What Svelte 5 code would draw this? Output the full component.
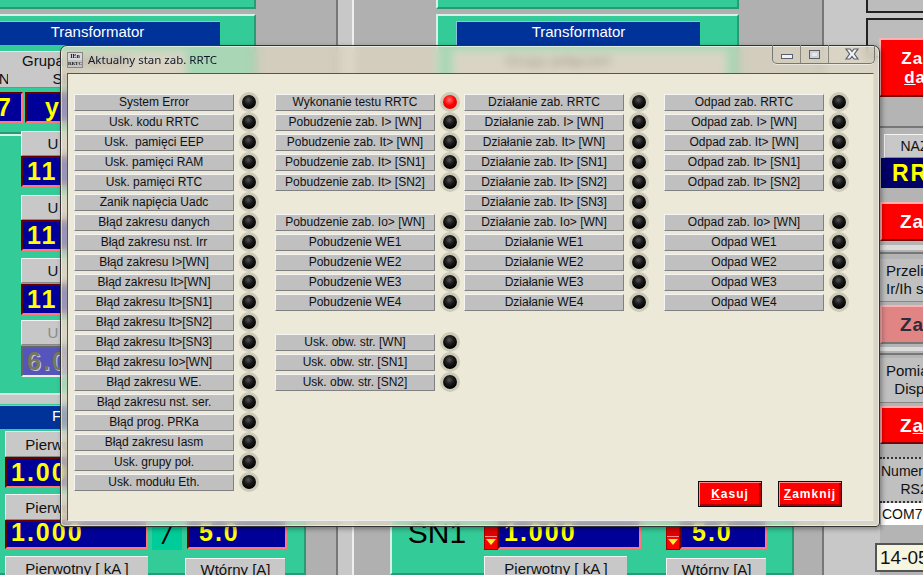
<script lang="ts">
  type Item = { label: string; on?: boolean } | null;

  const col1: Item[] = [
    "System Error", "Usk. kodu RRTC", "Usk.  pamięci EEP", "Usk. pamięci RAM", "Usk. pamięci RTC",
    "Zanik napięcia Uadc", "Błąd zakresu danych", "Błąd zakresu nst. Irr", "Błąd zakresu I>[WN]",
    "Błąd zakresu It>[WN]", "Błąd zakresu It>[SN1]", "Błąd zakresu It>[SN2]", "Błąd zakresu It>[SN3]",
    "Błąd zakresu Io>[WN]", "Błąd zakresu WE.", "Błąd zakresu nst. ser.", "Błąd prog. PRKa",
    "Błąd zakresu Iasm", "Usk. grupy poł.", "Usk. modułu Eth.",
  ].map((label) => ({ label }));

  const col2: Item[] = [
    { label: "Wykonanie testu RRTC", on: true },
    { label: "Pobudzenie zab. I> [WN]" },
    { label: "Pobudzenie zab. It> [WN]" },
    { label: "Pobudzenie zab. It> [SN1]" },
    { label: "Pobudzenie zab. It> [SN2]" },
    null,
    { label: "Pobudzenie zab. Io> [WN]" },
    { label: "Pobudzenie WE1" },
    { label: "Pobudzenie WE2" },
    { label: "Pobudzenie WE3" },
    { label: "Pobudzenie WE4" },
    null,
    { label: "Usk. obw. str. [WN]" },
    { label: "Usk. obw. str. [SN1]" },
    { label: "Usk. obw. str. [SN2]" },
  ];

  const col3: Item[] = [
    "Działanie zab. RRTC", "Działanie zab. I> [WN]", "Działanie zab. It> [WN]", "Działanie zab. It> [SN1]",
    "Działanie zab. It> [SN2]", "Działanie zab. It> [SN3]", "Działanie zab. Io> [WN]", "Działanie WE1",
    "Działanie WE2", "Działanie WE3", "Działanie WE4",
  ].map((label) => ({ label }));

  const col4: Item[] = [
    { label: "Odpad zab. RRTC" },
    { label: "Odpad zab. I> [WN]" },
    { label: "Odpad zab. It> [WN]" },
    { label: "Odpad zab. It> [SN1]" },
    { label: "Odpad zab. It> [SN2]" },
    null,
    { label: "Odpad zab. Io> [WN]" },
    { label: "Odpad WE1" },
    { label: "Odpad WE2" },
    { label: "Odpad WE3" },
    { label: "Odpad WE4" },
  ];

  const columns = [col1, col2, col3, col4];

  // pieces of the main window lying behind the dialog: [class, x, y, w, h, text]
  const desk: [string, number, number, number, number, string][] = [
    ["light", 338, 0, 14, 575, ""],
    ["vline", 336, 0, 2, 575, ""],
    ["wline", 352, 0, 2, 575, ""],
    ["vline", 822, 0, 2, 575, ""],
    ["light", 824, 0, 99, 575, ""],
    ["green", -4, -4, 260, 13, ""],
    ["green", 436, -4, 303, 13, ""],
    ["green", -4, 14, 260, 120, ""],
    ["green", 436, 14, 303, 120, ""],
    ["green", -4, 134, 310, 441, ""],
    ["green", 390, 134, 404, 441, ""],
    ["band", 0, 393, 306, 11, ""],
    ["navy", -26, 21, 246, 24, "Transformator"],
    ["navy", 456, 21, 244, 24, "Transformator"],
    ["btn", -4, 51, 190, 37, ""],
    ["plain", 0, 51, 150, 18, "Grupa połączeń"],
    ["plain", -14, 69, 22, 18, "WN"],
    ["plain", 52, 69, 30, 18, "SN1"],
    ["btn", 453, 51, 274, 37, ""],
    ["plain", 458, 51, 200, 18, "Grupy połączeń"],
    ["val", -4, 92, 27, 31, "<span class='seven'>7</span>"],
    ["val yval", 25, 92, 100, 31, "y"],
    ["btn", 21, 131, 63, 25, "U"],
    ["val", 21, 156, 100, 31, "11"],
    ["btn", 21, 195, 63, 25, "U"],
    ["val", 21, 220, 100, 31, "11"],
    ["btn", 21, 258, 63, 25, "U"],
    ["val", 21, 284, 100, 31, "11"],
    ["btn dim", 21, 320, 63, 25, "U"],
    ["val slate", 21, 346, 100, 31, "6.0"],
    ["navy", -4, 405, 120, 24, "F"],
    ["btn", 5, 431, 143, 26, "Pierwotny [ kA ]"],
    ["val", 5, 457, 143, 31, "1.000"],
    ["btn", 5, 494, 143, 26, "Pierwotny [ kA ]"],
    ["val low", 5, 520, 143, 29, "1.000"],
    ["slash", 152, 520, 30, 30, "/"],
    ["val low second", 187, 520, 100, 29, "5.0"],
    ["btn", 5, 556, 143, 24, "Pierwotny [ kA ]"],
    ["btn", 185, 558, 100, 22, "Wtórny [A]"],
    ["sn", 397, 516, 80, 34, "SN1"],
    ["spin", 484, 526, 14, 24, ""],
    ["val low", 498, 520, 143, 29, "1.000"],
    ["spin", 666, 526, 14, 24, ""],
    ["val low second", 680, 520, 87, 29, "5.0"],
    ["btn", 484, 556, 143, 24, "Pierwotny [ kA ]"],
    ["btn", 666, 558, 100, 22, "Wtórny [A]"],
    ["outline", 866, -4, 70, 17, ""],
    ["outline", 866, 18, 70, 40, ""],
    ["side", 880, 96, 43, 479, ""],
    ["red top", 879, 38, 92, 59, "<span>Zadaj<br><u>d</u>ane</span>"],
    ["vline", 880, 126, 43, 2, ""],
    ["btn", 884, 134, 82, 24, "NAZWA"],
    ["val navyval", 881, 158, 60, 30, "RR"],
    ["red", 880, 202, 80, 39, "Za"],
    ["wband", 880, 245, 43, 5, ""],
    ["vline", 880, 252, 43, 2, ""],
    ["note", 880, 259, 60, 43, "Przeli<br>Ir/Ih st"],
    ["red faded", 880, 305, 80, 39, "Za"],
    ["wband", 880, 347, 43, 4, ""],
    ["vline", 880, 353, 43, 2, ""],
    ["note", 880, 358, 60, 45, "Pomia<br>&nbsp;&nbsp;Disp"],
    ["red", 880, 406, 80, 38, "<span>Z<u>a</u></span>"],
    ["note dotted", 880, 457, 60, 46, "Numer<br>&nbsp;&nbsp;&nbsp;&nbsp;&nbsp;RS2"],
    ["com", 881, 503, 60, 22, "COM7"],
    ["date", 875, 543, 60, 29, "14-05"],
  ];
</script>

<div class="desk">
  {#each desk as [cls, x, y, w, h, text]}
    <div class="piece {cls}" style="left:{x}px;top:{y}px;width:{w}px;height:{h}px">{@html text}</div>
  {/each}

  <section class="dialog">
    <header class="titlebar">
      <span class="app-icon"><b>IEn</b><b>RRTC</b></span>
      <span class="title">Aktualny stan zab. RRTC</span>
      <div class="caption">
        <span class="cap min"><i></i></span>
        <span class="cap max"><i></i></span>
        <span class="cap close">
          <svg width="18" height="14" viewBox="0 0 18 14">
            <path d="M3 2h4l2 2.6L11 2h4l-3.6 5 3.6 5h-4L9 9.4 7 12H3l3.6-5z" fill="#f2f2f2" stroke="#5a5f70" stroke-width="1.2" />
          </svg>
        </span>
      </div>
    </header>

    <div class="client">
      <div class="columns">
        {#each columns as col}
          <div class="col">
            {#each col as item}
              {#if item}
                <div class="row">
                  <div class="label">{item.label}</div>
                  <span class="led" class:on={item.on}></span>
                </div>
              {:else}
                <div class="row"></div>
              {/if}
            {/each}
          </div>
        {/each}
      </div>

      <div class="actions">
        <button class="action"><u>K</u>asuj</button>
        <button class="action"><u>Z</u>amknij</button>
      </div>
    </div>
  </section>
</div>

<style>
  :global(body) {
    margin: 0;
    overflow: hidden;
  }

  .desk {
    position: relative;
    width: 923px;
    height: 575px;
    overflow: hidden;
    font-family: "Liberation Sans", Arial, sans-serif;
    background: #b0b0b0;
  }

  .piece {
    position: absolute;
    box-sizing: border-box;
    display: flex;
    align-items: center;
    justify-content: center;
    text-align: center;
    white-space: nowrap;
    overflow: hidden;
  }

  .light { background: #c8c8c8; }
  .vline { background: #777; }
  .wline { background: #eee; }
  .band { background: #c4c8c6; border-top: 2px solid #dfe6e2; }
  .wband { background: #dcdcdc; }
  .side { background: #b4b4b4; }

  .green {
    background: #33cc99;
    border: 2px solid #d8f0e8;
    border-bottom-color: #2a9a76;
    border-right-color: #2a9a76;
  }

  .navy {
    background: #003399;
    color: #fff;
    font-size: 15px;
    padding-bottom: 5px;
    border-top: 1px solid #8fc0e0;
    border-left: 1px solid #8fc0e0;
  }

  .btn {
    background: #c8c8c8;
    color: #111;
    border-top: 1px solid #f4f4f4;
    border-left: 1px solid #f4f4f4;
    border-bottom: 1px solid #888;
    font-size: 15px;
  }

  .btn.dim { color: #8a8a8a; }

  .plain {
    color: #111;
    font-size: 15px;
  }

  .val {
    background: #000099;
    color: #ffff00;
    font-weight: bold;
    font-size: 25px;
    letter-spacing: 2px;
    border: 2px solid #ff7777;
    border-top-color: #600;
    border-left-color: #600;
    justify-content: flex-start;
    padding-left: 4px;
  }

  .val.low { padding-bottom: 5px; }
  .val.second { padding-left: 10px; }
  .val.yval { padding-left: 18px; }

  :global(.seven) {
    margin-left: -5px;
  }

  .val.slate {
    background: #5555bb;
    color: #77775a;
    border-color: #666 #ddd #eee #666;
    text-shadow: 1px 1px 0 #c8c8d8;
  }

  .val.navyval {
    background: #000066;
    border: none;
    padding-left: 11px;
    font-size: 23px;
  }

  .slash {
    background: #00cc99;
    font-size: 28px;
    font-style: italic;
  }

  .sn {
    color: #000;
    font-size: 30px;
  }

  .spin {
    background: linear-gradient(#e00000 0 40%, #ff8888 40% 46%, #ff0000 46%);
    border: 1px solid #a00;
  }

  .spin::after {
    content: "";
    position: absolute;
    left: 1px;
    bottom: 4px;
    border: 5px solid transparent;
    border-top: 6px solid #ffee33;
    border-bottom: 0;
  }

  .outline {
    border: 2px solid #222;
    background: #bcbcbc;
  }

  .red {
    background: #ff0000;
    color: #fff;
    font-weight: bold;
    font-size: 19px;
    line-height: 19px;
    letter-spacing: 1px;
    border-top: 2px solid #ffb0b0;
    border-left: 2px solid #ffb0b0;
    border-bottom: 2px solid #700;
    justify-content: flex-start;
    padding-left: 18px;
    text-align: left;
  }

  .red.top {
    justify-content: center;
    padding-left: 0;
    text-align: center;
    font-size: 17px;
  }

  .red.faded {
    background: #e08484;
    color: #2c2c3c;
    border-bottom-color: #777;
  }

  .note {
    background: #c0c0c0;
    color: #111;
    font-size: 15px;
    line-height: 18px;
    justify-content: flex-start;
    padding-left: 6px;
    text-align: left;
    border-bottom: 1px solid #888;
  }

  .note.dotted {
    font-size: 14px;
    border-top: 2px dotted #333;
    border-bottom: 2px dotted #333;
    padding-left: 1px;
  }

  .com {
    background: #fff;
    font-size: 14px;
    color: #111;
    justify-content: flex-start;
    padding-left: 1px;
  }

  .btn:has(+ .navyval) {
    font-size: 14px;
  }

  .date {
    background: #f5f5e0;
    font-size: 19px;
    color: #111;
    border: 2px solid #555;
    justify-content: flex-start;
    padding-left: 3px;
  }

  .dialog {
    position: absolute;
    left: 60px;
    top: 45px;
    width: 820px;
    height: 482px;
    box-sizing: border-box;
    padding: 0 5px 5px 6px;
    display: flex;
    flex-direction: column;
    border-radius: 7px 7px 4px 4px;
    border: 1px solid #333;
    background: rgba(225, 218, 195, 0.68);
    -webkit-backdrop-filter: blur(4px);
    backdrop-filter: blur(4px);
    box-shadow: 0 0 0 1px rgba(255, 255, 255, 0.55) inset, 2px 2px 5px rgba(0, 0, 0, 0.35);
  }

  .titlebar {
    height: 27px;
    flex: none;
    display: flex;
    align-items: center;
    gap: 5px;
    position: relative;
  }

  .app-icon {
    width: 16px;
    height: 16px;
    background: #d8d8d8;
    border: 1px solid #888;
    box-sizing: border-box;
    display: flex;
    flex-direction: column;
    align-items: center;
    font: bold 6px/7px "Liberation Serif", serif;
    color: #111;
  }

  .app-icon b + b {
    font-size: 5px;
    background: #c4c4c4;
    width: 100%;
    text-align: center;
  }

  .title {
    font-size: 11.5px;
    color: #10182a;
    font-family: "Noto Sans", "Liberation Sans", sans-serif;
  }

  .caption {
    position: absolute;
    right: -1px;
    top: -1px;
    width: 103px;
    height: 19px;
    display: flex;
    box-sizing: border-box;
    border: 1px solid #777;
    border-top: none;
    border-radius: 0 0 5px 5px;
    box-shadow: 0 1px 0 rgba(255, 255, 255, 0.5);
  }

  .cap {
    display: flex;
    align-items: center;
    justify-content: center;
    box-sizing: border-box;
    border-right: 1px solid #8a887e;
  }

  .cap.min { width: 28px; }
  .cap.max { width: 28px; }
  .cap.close { flex: 1; border-right: none; }

  .min i {
    width: 10px;
    height: 3px;
    background: #f2f2f2;
    border: 1px solid #5a5f70;
    margin-top: 5px;
  }

  .max i {
    width: 5px;
    height: 3px;
    background: #e8e8e8;
    border: 2px solid #cfd0d4;
    outline: 1px solid #5a5f70;
  }

  .client {
    flex: 1;
    background: #ece9d8;
    border: 1px solid #555;
    border-right-color: #ddd;
    border-bottom-color: #eee;
    box-sizing: border-box;
    position: relative;
    padding: 19px 0 0 6px;
  }

  .columns {
    display: flex;
  }

  .col {
    display: flex;
    flex-direction: column;
    gap: 2px;
  }

  .col:nth-child(1) { width: 201px; }
  .col:nth-child(2) { width: 189px; }
  .col:nth-child(3) { width: 200px; }

  .row {
    height: 18px;
    display: flex;
    align-items: center;
    gap: 4px;
  }

  .label {
    width: 160px;
    height: 17px;
    box-sizing: border-box;
    background: #c0c0c0;
    border-top: 1px solid #f4f4f4;
    border-left: 1px solid #f4f4f4;
    border-bottom: 1px solid #808080;
    border-right: 1px solid #808080;
    font-size: 12px;
    line-height: 15px;
    color: #111;
    text-align: center;
    white-space: pre;
  }

  .led {
    width: 14px;
    height: 14px;
    margin-left: 4px;
    border-radius: 50%;
    background: radial-gradient(circle at 45% 35%, #555 0, #1a1a1a 35%, #000 75%);
    box-shadow: 0 0 0 3px #cdcab8;
  }

  .led.on {
    background: radial-gradient(circle at 45% 35%, #ff7070 0, #ff0000 45%, #c80000 100%);
  }

  .actions {
    position: absolute;
    right: 31px;
    bottom: 13px;
    display: flex;
    gap: 16px;
  }

  .action {
    width: 64px;
    height: 26px;
    padding: 0;
    background: #ff0000;
    border: 1px solid #111;
    box-shadow: inset 1px 1px 0 #ff9090, inset -2px -2px 0 #b00000;
    color: #fff;
    font: bold 12px "Liberation Sans", sans-serif;
    letter-spacing: 1px;
  }
</style>
